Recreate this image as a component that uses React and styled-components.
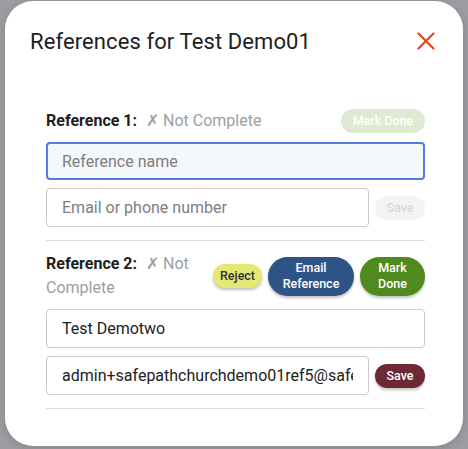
import styled, { createGlobalStyle } from "styled-components";

const Global = createGlobalStyle`
  html, body {
    margin: 0;
    padding: 0;
    background: #9c9da1;
    font-family: Roboto, "Noto Sans", Arial, sans-serif;
  }
  * { box-sizing: border-box; }
`;

const Backdrop = styled.div`
  width: 468px;
  height: 449px;
  padding: 1px 5px 0 5px;
  background: #9c9da1;
`;

const Modal = styled.div`
  width: 458px;
  height: 445px;
  background: #fff;
  border-radius: 28px;
  padding: 25px 28px 0 25px;
  box-shadow: 0 2px 10px rgba(0, 0, 0, 0.15);
`;

const Header = styled.div`
  display: flex;
  align-items: center;
  justify-content: space-between;
  height: 30px;
`;

const Title = styled.h2`
  margin: 0;
  font-size: 22px;
  font-weight: 400;
  color: #212121;
  letter-spacing: 0.1px;
`;

const Close = styled.button`
  border: none;
  background: none;
  padding: 0;
  width: 18px;
  height: 18px;
  display: flex;
  cursor: pointer;
`;

const Body = styled.div`
  padding: 53px 10px 0 16px;
`;

const Section = styled.div`
  display: flex;
  flex-direction: column;
  gap: 8px;
  padding: 0 0 13px;
  border-bottom: 1px solid #dedede;
  & + & {
    padding-top: 11px;
  }
`;

const Row = styled.div`
  display: flex;
  align-items: center;
  justify-content: space-between;
  gap: 6px;
  margin-bottom: 1px;
`;

const Label = styled.div`
  flex: 1;
  font-size: 16px;
  line-height: 24px;
  color: #9e9e9e;
`;

const Name = styled.b`
  color: #212121;
  font-weight: 700;
  margin-right: 9px;
`;

const Actions = styled.div`
  display: flex;
  align-items: center;
  gap: 6px;
`;

const Pill = styled.button`
  width: ${(p) => p.$w}px;
  height: ${(p) => p.$h || 24}px;
  border: none;
  border-radius: 20px;
  padding: 0;
  background: ${(p) => p.$bg};
  color: ${(p) => p.$fg || "#fff"};
  font-family: Roboto, Arial, sans-serif;
  font-size: 12.5px;
  font-weight: 500;
  line-height: 16px;
  white-space: pre-line;
  box-shadow: ${(p) => (p.$flat ? "none" : "0 2px 3px rgba(0, 0, 0, 0.25)")};
  cursor: pointer;
  flex-shrink: 0;
`;

const Field = styled.input`
  width: 100%;
  height: ${(p) => (p.$focused ? 38 : 39)}px;
  border: ${(p) => (p.$focused ? "2px solid #5479e0" : "1px solid #c9c9ce")};
  background: ${(p) => (p.$focused ? "#f5f8fb" : "#fff")};
  border-radius: 4px;
  padding: 0 ${(p) => (p.$focused ? 14 : 15)}px;
  font-family: Roboto, Arial, sans-serif;
  font-size: 16px;
  color: #222;
  caret-color: #222;
  outline: none;
  &::placeholder {
    color: #7d7d83;
  }
`;

const FieldRow = styled.div`
  display: flex;
  align-items: center;
  gap: 6px;
`;

const references = [
  {
    n: 1,
    name: "",
    contact: "",
    done: false,
  },
  {
    n: 2,
    name: "Test Demotwo",
    contact: "admin+safepathchurchdemo01ref5@safepathchurch.com",
    done: true,
  },
];

const CloseIcon = () => (
  <svg width="18" height="18" viewBox="0 0 18 18">
    <path d="M1.5 1.5 L16.5 16.5 M16.5 1.5 L1.5 16.5" stroke="#e5461a" strokeWidth="2.2" strokeLinecap="round" />
  </svg>
);

const App = () => {
  return (
    <>
      <Global />
      <Backdrop>
        <Modal>
          <Header>
            <Title>References for Test Demo01</Title>
            <Close aria-label="close">
              <CloseIcon />
            </Close>
          </Header>
          <Body>
            {references.map((r) => (
              <Section key={r.n}>
                <Row>
                  <Label>
                    <Name>Reference {r.n}:</Name>✗ Not Complete
                  </Label>
                  {r.done ? (
                    <Actions>
                      <Pill $w={49} $bg="#e5e872" $fg="#333">
                        Reject
                      </Pill>
                      <Pill $w={86} $h={39} $bg="#2e5387">
                        {"Email\nReference"}
                      </Pill>
                      <Pill $w={65} $h={39} $bg="#4f8a1f">
                        {"Mark\nDone"}
                      </Pill>
                    </Actions>
                  ) : (
                    <Pill $w={84} $bg="#dfe9d3" $flat>
                      Mark Done
                    </Pill>
                  )}
                </Row>
                <Field
                  $focused={!r.done}
                  autoFocus={!r.done}
                  placeholder="Reference name"
                  defaultValue={r.name}
                />
                <FieldRow>
                  <Field placeholder="Email or phone number" defaultValue={r.contact} />
                  {r.done ? (
                    <Pill $w={50} $bg="#6d2a35">
                      Save
                    </Pill>
                  ) : (
                    <Pill $w={50} $bg="#f3f3f3" $fg="#d9d9d9" $flat>
                      Save
                    </Pill>
                  )}
                </FieldRow>
              </Section>
            ))}
          </Body>
        </Modal>
      </Backdrop>
    </>
  );
};

export default App;
